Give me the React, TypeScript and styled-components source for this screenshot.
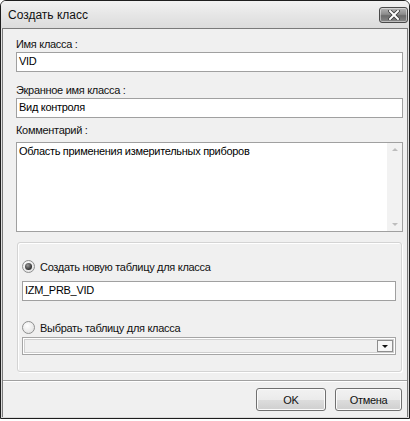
import React from "react";
import styled, { createGlobalStyle } from "styled-components";

const Global = createGlobalStyle`
  html, body { margin: 0; padding: 0; background: #ffffff; }
  body { font-family: "Liberation Sans", Arial, sans-serif; font-size: 11px; letter-spacing: -0.3px; color: #000; }
  * { box-sizing: border-box; }
`;

const Window = styled.div`
  width: 410px;
  height: 419px;
  border: 1px solid #1e1e1e;
  border-radius: 6px 6px 0 0;
  background: linear-gradient(#f4f4f4, #e2e2e2 30px, #dadada);
  display: flex;
  flex-direction: column;
  overflow: hidden;
`;

const TitleBar = styled.div`
  height: 27px;
  flex: none;
  display: flex;
  align-items: center;
  justify-content: space-between;
  padding: 0 1px 0 7px;
  background: linear-gradient(#f2f2f2, #e6e6e6 50%, #dcdcdc);
`;

const Title = styled.span`
  font-size: 12px;
  color: #111;
  letter-spacing: 0;
`;

const CloseButton = styled.div`
  width: 29px;
  height: 16px;
  margin-top: 1px;
  border: 1px solid #4a4a4a;
  border-radius: 3px;
  background: linear-gradient(#b4b4b4, #8c8c8c 45%, #6a6a6a 55%, #888888);
  box-shadow: inset 0 0 0 1px rgba(255, 255, 255, 0.45);
  display: flex;
  align-items: center;
  justify-content: center;
`;

const Client = styled.div`
  flex: 1;
  margin: 0 1px 1px 1px;
  background: #f0f0f0;
  border: 1px solid #7a7a7a;
  border-bottom: none;
  display: flex;
  flex-direction: column;
`;

const Body = styled.div`
  padding: 9px 4px 0 13px;
  display: flex;
  flex-direction: column;
`;

const Label = styled.div<{ $top: number; $gap: number }>`
  height: 13px;
  line-height: 13px;
  margin-top: ${(p) => p.$top}px;
  margin-bottom: ${(p) => p.$gap}px;
  color: #111;
`;

const TextBox = styled.div<{ $h?: number }>`
  height: ${(p) => p.$h ?? 20}px;
  border: 1px solid #a0a0a0;
  box-shadow: inset 0 0 0 1px #ffffff;
  background: #ffffff;
  padding: 0 2px;
  line-height: 17px;
  color: #000;
  white-space: nowrap;
`;

const Memo = styled.div`
  height: 90px;
  border: 1px solid #a0a0a0;
  background: #ffffff;
  display: flex;
`;

const MemoText = styled.div`
  flex: 1;
  padding: 1px 2px;
  line-height: 14px;
`;

const ScrollBar = styled.div`
  width: 15px;
  background: #f2f2f2;
  display: flex;
  flex-direction: column;
  justify-content: space-between;
  align-items: center;
  padding: 5px 0;
`;

const Arrow = styled.div<{ $up?: boolean }>`
  width: 0;
  height: 0;
  border-left: 3px solid transparent;
  border-right: 3px solid transparent;
  ${(p) =>
    p.$up
      ? "border-bottom: 3px solid #bdbdbd;"
      : "border-top: 3px solid #bdbdbd;"}
`;

const GroupBox = styled.div`
  margin: 10px 1px 0 1px;
  height: 130px;
  border: 1px solid #d4d4d4;
  border-radius: 3px;
  box-shadow: inset 1px 1px 0 #ffffff, 1px 1px 0 #ffffff;
  padding: 17px 5px 0 4px;
  display: flex;
  flex-direction: column;
`;

const RadioRow = styled.div<{ $top: number; $gap: number }>`
  display: flex;
  align-items: center;
  gap: 5px;
  height: 13px;
  margin-top: ${(p) => p.$top}px;
  margin-bottom: ${(p) => p.$gap}px;
  color: #111;
`;

const Radio = styled.div<{ $checked?: boolean }>`
  width: 13px;
  height: 13px;
  border-radius: 50%;
  border: 1px solid #8e8f8f;
  background: radial-gradient(circle at 40% 35%, #ffffff, #dcdcdc);
  display: flex;
  align-items: center;
  justify-content: center;
  &::after {
    content: "";
    display: ${(p) => (p.$checked ? "block" : "none")};
    width: 7px;
    height: 7px;
    border-radius: 50%;
    background: radial-gradient(circle at 40% 35%, #9a9a9a, #2e2e2e 70%);
  }
`;

const Combo = styled.div`
  height: 18px;
  border: 1px solid #a5a5a5;
  box-shadow: inset 0 0 0 1px #ffffff, inset 0 0 0 2px #cfcfcf;
  background: #f0f0f0;
  display: flex;
  justify-content: flex-end;
  align-items: center;
  padding-right: 2px;
`;

const ComboButton = styled.div`
  width: 16px;
  height: 12px;
  border: 1px solid #8e8e8e;
  background: #f6f6f6;
  display: flex;
  align-items: center;
  justify-content: center;
  &::after {
    content: "";
    border-left: 3px solid transparent;
    border-right: 3px solid transparent;
    border-top: 3px solid #111;
  }
`;

const Separator = styled.div`
  margin-top: 8px;
  height: 1px;
  background: #a0a0a0;
  box-shadow: 0 1px 0 #ffffff;
`;

const Footer = styled.div`
  display: flex;
  justify-content: flex-end;
  gap: 9px;
  padding: 7px 5px 0 0;
`;

const Button = styled.div<{ $w: number }>`
  width: ${(p) => p.$w}px;
  height: 23px;
  border: 1px solid #707070;
  border-radius: 3px;
  background: linear-gradient(#f2f2f2, #ebebeb 50%, #dddddd 51%, #cfcfcf);
  box-shadow: inset 0 0 0 1px #fbfbfb;
  display: flex;
  align-items: center;
  justify-content: center;
  color: #111;
`;

export default function App() {
  return (
    <>
      <Global />
      <Window>
        <TitleBar>
          <Title>Создать класс</Title>
          <CloseButton>
            <svg width="12" height="10" viewBox="0 0 12 10">
              <path d="M2 1 L10 9 M10 1 L2 9" stroke="#3a3a3a" strokeWidth="3.6" strokeLinecap="square" />
              <path d="M2 1 L10 9 M10 1 L2 9" stroke="#ffffff" strokeWidth="2" strokeLinecap="square" />
            </svg>
          </CloseButton>
        </TitleBar>
        <Client>
          <Body>
            <Label $top={0} $gap={1}>Имя класса :</Label>
            <TextBox>VID</TextBox>
            <Label $top={12} $gap={1}>Экранное имя класса :</Label>
            <TextBox>Вид контроля</TextBox>
            <Label $top={6} $gap={5}>Комментарий :</Label>
            <Memo>
              <MemoText>Область применения измерительных приборов</MemoText>
              <ScrollBar>
                <Arrow $up />
                <Arrow />
              </ScrollBar>
            </Memo>
            <GroupBox>
              <RadioRow $top={0} $gap={8}>
                <Radio $checked />
                Создать новую таблицу для класса
              </RadioRow>
              <TextBox>IZM_PRB_VID</TextBox>
              <RadioRow $top={20} $gap={3}>
                <Radio />
                Выбрать таблицу для класса
              </RadioRow>
              <Combo>
                <ComboButton />
              </Combo>
            </GroupBox>
          </Body>
          <Separator />
          <Footer>
            <Button $w={70}>OK</Button>
            <Button $w={67}>Отмена</Button>
          </Footer>
        </Client>
      </Window>
    </>
  );
}
